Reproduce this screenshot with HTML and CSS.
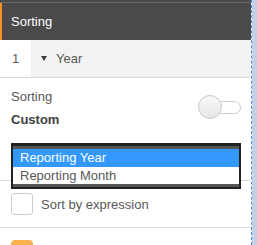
FILE: index.html
```html
<!DOCTYPE html>
<html lang="en">
<head>
    <meta charset="UTF-8">
    <title>Sorting</title>
    <link rel="stylesheet" href="styles.css">
</head>
<body>
    <div class="page">
        <div class="panel">
            <div class="panel-top"></div>
            <div class="header">Sorting</div>

            <div class="dim-row">
                <div class="dim-index">1</div>
                <div class="dim-name">
                    <span class="caret"></span>
                    Year
                </div>
            </div>

            <div class="section">
                <div class="sort-row">
                    <div class="sort-text">
                        <div class="label">Sorting</div>
                        <div class="value">Custom</div>
                    </div>
                    <div class="toggle">
                        <div class="toggle-track"></div>
                        <div class="toggle-knob"></div>
                    </div>
                </div>
                <div class="select-wrap">
                    <!-- open dropdown list -->
                    <div class="listbox">
                        <div class="option selected">Reporting Year</div>
                        <div class="option">Reporting Month</div>
                    </div>
                </div>
            </div>

            <div class="section check-row">
                <span class="checkbox"></span>
                <span class="check-label">Sort by expression</span>
            </div>

            <div class="section next">
                <span class="orange-chip"></span>
            </div>
        </div>
        <div class="side-strip"></div>
    </div>
</body>
</html>
```

FILE: styles.css
```css
* {
    margin: 0;
    padding: 0;
    box-sizing: border-box;
}

body {
    font-family: 'Liberation Sans', Arial, sans-serif;
    background-color: #ffffff;
    color: #595959;
}

.page {
    display: flex;
    width: 257px;
    height: 245px;
    overflow: hidden;
}

.panel {
    width: 252px;
    border-right: 1px dashed #4a8fe0;
    background: white;
}

.side-strip {
    flex: 1;
    background-color: #c5d0e2;
}

.panel-top {
    height: 3px;
    background-color: #4a4a4a;
    border-bottom: 1px solid #6a6a6a;
}

.header {
    height: 37px;
    display: flex;
    align-items: center;
    padding-left: 9px;
    border-left: 2px solid #f7931e;
    background-color: #4a4a4a;
    color: white;
    font-size: 13px;
}

.dim-row {
    display: flex;
    height: 38px;
    border-bottom: 1px solid #d9d9d9;
    font-size: 13px;
}

.dim-index {
    width: 31px;
    display: flex;
    align-items: center;
    justify-content: center;
    background: white;
}

.dim-name {
    flex: 1;
    display: flex;
    align-items: center;
    padding-left: 10px;
    background-color: #f2f2f2;
}

.caret {
    width: 0;
    height: 0;
    margin-right: 9px;
    border-left: 3px solid transparent;
    border-right: 3px solid transparent;
    border-top: 5px solid #404040;
}

.section {
    padding: 0 10px 0 11px;
    border-bottom: 1px solid #d9d9d9;
}

.sort-row {
    display: flex;
    align-items: center;
    justify-content: space-between;
    padding-top: 11px;
}

.label {
    font-size: 13px;
    line-height: 16px;
}

.value {
    margin-top: 7px;
    font-size: 13px;
    line-height: 16px;
    font-weight: bold;
    color: #404040;
}

.toggle {
    position: relative;
    width: 43px;
    height: 24px;
    margin-top: -3px;
}

.toggle-track {
    position: absolute;
    left: 7px;
    right: 0;
    top: 6px;
    height: 13px;
    border: 1px solid #cccccc;
    border-radius: 7px;
    background: white;
}

.toggle-knob {
    position: absolute;
    left: 0;
    top: 0;
    width: 24px;
    height: 24px;
    border: 1px solid #c8c8c8;
    border-radius: 50%;
    background: linear-gradient(#fafafa, #e6e6e6);
}

.select-wrap {
    position: relative;
    height: 28px;
    margin-top: 15px;
    margin-bottom: 9px;
}

.listbox {
    position: absolute;
    top: 0;
    left: 0;
    width: 230px;
    border: 2px solid #222222;
    border-top-width: 3px;
    background: white;
    padding: 3px 0;
    box-shadow: inset 0 3px 0 #555555, inset 0 -3px 0 #555555;
    font-size: 13px;
    z-index: 2;
}

.option {
    height: 17px;
    line-height: 17px;
    padding-left: 7px;
    color: #595959;
}

.option.selected {
    height: 18px;
    line-height: 18px;
    background-color: #3399ff;
    color: white;
}

.check-row {
    display: flex;
    align-items: center;
    height: 47px;
}

.checkbox {
    width: 22px;
    height: 22px;
    border: 1px solid #cccccc;
    border-radius: 3px;
    background: white;
}

.check-label {
    margin-left: 8px;
    font-size: 13px;
}

.next {
    border-bottom: none;
    padding-top: 12px;
}

.orange-chip {
    display: block;
    width: 22px;
    height: 22px;
    border-radius: 4px;
    background-color: #f9b24e;
}
```
